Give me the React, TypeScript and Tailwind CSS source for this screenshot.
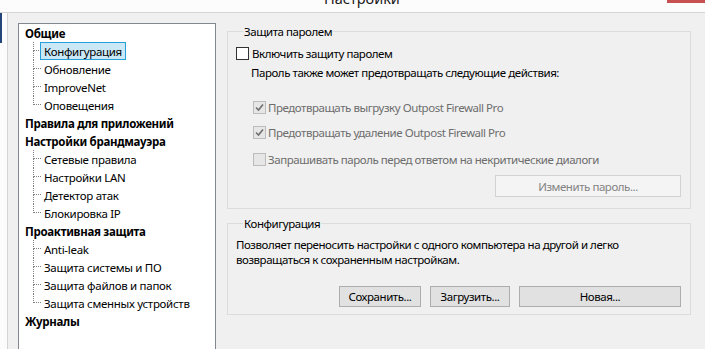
import React from 'react';

type TreeNode = {
  label: string;
  children?: string[];
};

const tree: TreeNode[] = [
  { label: 'Общие', children: ['Конфигурация', 'Обновление', 'ImproveNet', 'Оповещения'] },
  { label: 'Правила для приложений' },
  { label: 'Настройки брандмауэра', children: ['Сетевые правила', 'Настройки LAN', 'Детектор атак', 'Блокировка IP'] },
  { label: 'Проактивная защита', children: ['Anti-leak', 'Защита системы и ПО', 'Защита файлов и папок', 'Защита сменных устройств'] },
  { label: 'Журналы' },
];

const selected = 'Конфигурация';

function CheckBox({ checked, disabled }: { checked?: boolean; disabled?: boolean }) {
  return (
    <div
      className={`w-[13px] h-[13px] shrink-0 border flex items-center justify-center ${
        disabled ? 'bg-[#e6e6e6] border-[#bcbcbc]' : 'bg-white border-[#333333]'
      }`}
    >
      {checked && (
        <svg width="9" height="9" viewBox="0 0 9 9">
          <path d="M1 4.5 L3.5 7 L8 1.5" fill="none" stroke={disabled ? '#6f6f6f' : '#222'} strokeWidth="1.6" />
        </svg>
      )}
    </div>
  );
}

function TreeChild({ label, last }: { label: string; last: boolean }) {
  const isSel = label === selected;
  return (
    <div className="flex h-[18px] items-stretch">
      <div className="ml-[14px] w-[8px] flex flex-col">
        <div className="h-[9px] border-l border-b border-dotted border-[#808080]" />
        <div className={`h-[9px] ${last ? '' : 'border-l border-dotted border-[#808080]'}`} />
      </div>
      <div
        className={`ml-[-1px] px-[3px] flex items-center border whitespace-nowrap ${
          isSel ? 'bg-[#cbe8f6] border-[#26a0da]' : 'border-transparent'
        }`}
      >
        {label}
      </div>
    </div>
  );
}

function Btn({ children, className, disabled }: { children: React.ReactNode; className: string; disabled?: boolean }) {
  return (
    <div
      className={`border flex items-center justify-center ${className} ${
        disabled ? 'bg-[#f4f4f4] border-[#d2d2d2] text-[#838383]' : 'bg-[#e1e1e1] border-[#adadad] text-black'
      }`}
    >
      {children}
    </div>
  );
}

export default function App() {
  return (
    <div className="relative w-[705px] h-[349px] overflow-hidden bg-[#f0f0f0] flex flex-col text-[11.5px] tracking-[-0.3px] leading-[15px] text-black font-['Noto_Sans',sans-serif]">
      {/* neighbouring window edge */}
      <div className="absolute left-0 top-0 w-[2px] h-[43px] bg-[#24457a]" />

      {/* Title bar */}
      <div className="relative h-[13px] shrink-0 bg-[#fcfcfc] border-b border-[#d4d4d4] overflow-hidden flex">
        <span className="ml-[324px] mt-[-12px] text-[14.5px] tracking-normal leading-[20px] text-[#1a1a1a] whitespace-nowrap">Настройки</span>
        <div className="absolute right-0 top-0 w-[38px] h-[3px] bg-[#c75050]" />
      </div>

      <div className="flex flex-1 min-h-0">
        <div className="w-[8px] shrink-0 bg-[#fcfcfc] border-r border-[#d4d4d4]" />

        {/* Tree */}
        <div className="ml-[10px] mt-[10px] w-[198px] h-[360px] shrink-0 bg-white border border-[#828790] pl-[6px]">
          {tree.map((node) => (
            <div key={node.label}>
              <div className="h-[18px] flex items-center font-bold whitespace-nowrap">{node.label}</div>
              {node.children?.map((c, i) => (
                <div key={c} className="ml-[-6px]">
                  <TreeChild label={c} last={i === node.children!.length - 1} />
                </div>
              ))}
            </div>
          ))}
        </div>

        {/* Right panel */}
        <div className="ml-[11px] mt-[11px] w-[464px] flex flex-col tracking-[-0.45px]">
          <fieldset className="border border-[#dcdcdc] pl-[8px] pb-[11px] flex flex-col">
            <legend className="ml-[7px] px-[1px]">Защита паролем</legend>
            <div className="mt-[7px] h-[15px] flex items-center gap-[3px]">
              <CheckBox />
              <span>Включить защиту паролем</span>
            </div>
            <div className="mt-[4px] ml-[15px]">Пароль также может предотвращать следующие действия:</div>
            <div className="mt-[20px] ml-[17px] h-[15px] flex items-center gap-[2px] text-[#6d6d6d]">
              <CheckBox checked disabled />
              <span>Предотвращать выгрузку Outpost Firewall Pro</span>
            </div>
            <div className="mt-[10px] ml-[17px] h-[15px] flex items-center gap-[2px] text-[#6d6d6d]">
              <CheckBox checked disabled />
              <span>Предотвращать удаление Outpost Firewall Pro</span>
            </div>
            <div className="mt-[12px] ml-[17px] h-[15px] flex items-center gap-[2px] text-[#6d6d6d]">
              <CheckBox disabled />
              <span>Запрашивать пароль перед ответом на некритические диалоги</span>
            </div>
            <Btn disabled className="mt-[8px] self-end mr-[9px] w-[186px] h-[22px]">Изменить пароль...</Btn>
          </fieldset>

          <fieldset className="mt-[7px] border border-[#dcdcdc] pl-[8px] pb-[7px] flex flex-col">
            <legend className="ml-[7px] px-[1px]">Конфигурация</legend>
            <div className="mt-[6px]">
              Позволяет переносить настройки с одного компьютера на другой и легко
              <br />
              возвращаться к сохраненным настройкам.
            </div>
            <div className="mt-[19px] mr-[9px] flex justify-end gap-[9px]">
              <Btn className="w-[82px] h-[21px]">Сохранить...</Btn>
              <Btn className="w-[80px] h-[21px]">Загрузить...</Btn>
              <Btn className="w-[162px] h-[21px]">Новая...</Btn>
            </div>
          </fieldset>
        </div>
      </div>
    </div>
  );
}
